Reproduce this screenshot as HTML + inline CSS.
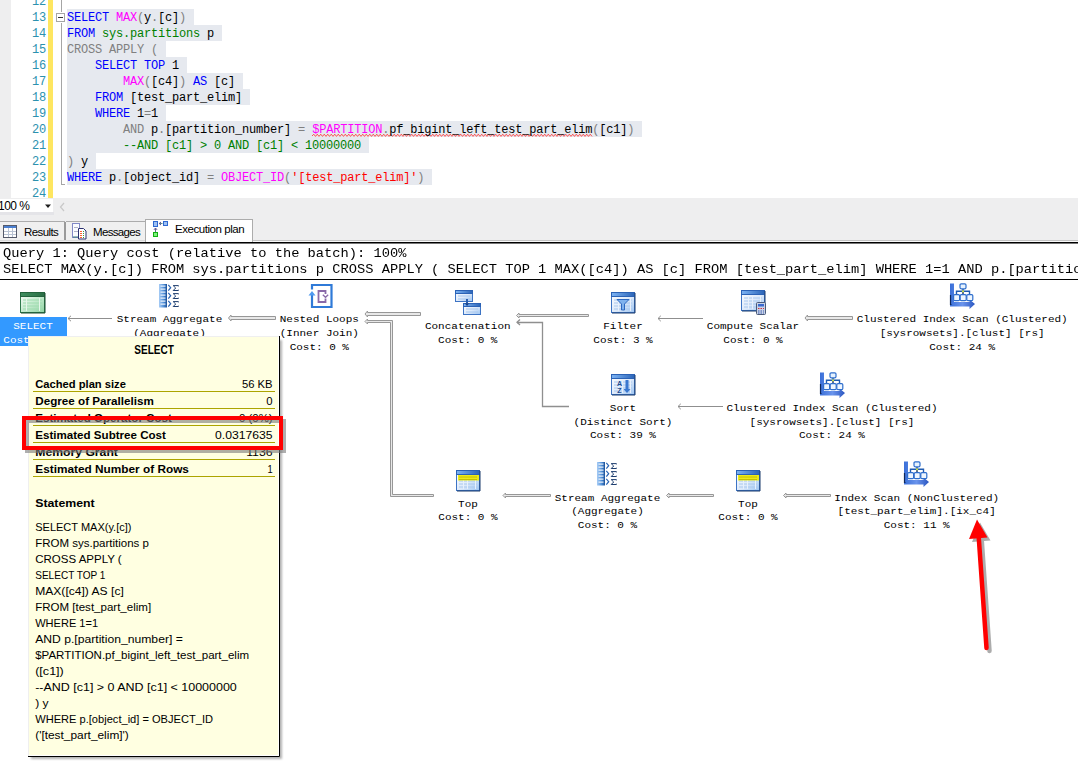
<!DOCTYPE html>
<html><head><meta charset="utf-8">
<style>
*{margin:0;padding:0;box-sizing:border-box}
html,body{width:1078px;height:774px;overflow:hidden;background:#fff;position:relative}
.a{position:absolute}
#ed{left:0;top:0;width:1078px;height:198px;background:#fff;overflow:hidden}
.ln{position:absolute;margin-top:1px;left:11px;width:35px;text-align:right;font:12px/16px "Liberation Mono",monospace;color:#2b91af;letter-spacing:-0.2px}
.cl{position:absolute;margin-top:1px;left:67px;height:16px;font:12px/16px "Liberation Mono",monospace;letter-spacing:-0.2px;white-space:pre;color:#000}
.hl{position:absolute;left:67px;height:16px;background:#e6e9ef}
.k{color:#0000ff}.f{color:#ff00ff}.g{color:#808080}.s{color:#008000}.c{color:#008000}.r{color:#ff0000}
.lab{position:absolute;font:11px/13.5px "Liberation Mono",monospace;color:#000;white-space:pre;text-align:center;transform:translateX(-50%)}
.tab{font:11px/13px "Liberation Sans",sans-serif;letter-spacing:-0.35px;color:#000;white-space:pre}
.hdr{font:13.73px/16px "Liberation Mono",monospace;color:#000;white-space:pre;transform:scaleY(0.87);transform-origin:0 11.7px}
</style></head><body>
<div id="ed" class="a">
  <div class="a" style="left:0;top:0;width:11px;height:198px;background:#eeeeef"></div>
  <div class="a" style="left:48px;top:0;width:5px;height:198px;background:#fee660"></div>
  <!-- highlights -->
  <div class="hl" style="top:9px;width:127px"></div>
  <div class="hl" style="top:25px;width:155px"></div>
  <div class="hl" style="top:41px;width:99px"></div>
  <div class="hl" style="top:57px;width:120px"></div>
  <div class="hl" style="top:73px;width:176px"></div>
  <div class="hl" style="top:89px;width:183px"></div>
  <div class="hl" style="top:105px;width:99px"></div>
  <div class="hl" style="top:121px;width:575px"></div>
  <div class="hl" style="top:137px;width:302px"></div>
  <div class="hl" style="top:153px;width:29px"></div>
  <div class="hl" style="top:169px;width:365px"></div>
  <!-- line numbers -->
  <div class="ln" style="top:-7px">12</div>
  <div class="ln" style="top:9px">13</div>
  <div class="ln" style="top:25px">14</div>
  <div class="ln" style="top:41px">15</div>
  <div class="ln" style="top:57px">16</div>
  <div class="ln" style="top:73px">17</div>
  <div class="ln" style="top:89px">18</div>
  <div class="ln" style="top:105px">19</div>
  <div class="ln" style="top:121px">20</div>
  <div class="ln" style="top:137px">21</div>
  <div class="ln" style="top:153px">22</div>
  <div class="ln" style="top:169px">23</div>
  <div class="ln" style="top:185px">24</div>
  <!-- fold -->
  <div class="a" style="left:61px;top:0;width:1px;height:12px;background:#a5a5a5"></div>
  <div class="a" style="left:56px;top:13px;width:9px;height:9px;border:1px solid #a5a5a5;background:#fff"></div>
  <div class="a" style="left:58px;top:17px;width:5px;height:1px;background:#333"></div>
  <div class="a" style="left:61px;top:23px;width:1px;height:162px;background:#a5a5a5"></div>
  <div class="a" style="left:61px;top:184px;width:4px;height:1px;background:#a5a5a5"></div>
  <svg class="a" style="left:0;top:0" width="700" height="198"><path d="M312 136 L313.75 134.2 L315.50 136.4 L317.25 134.2 L319.00 136.4 L320.75 134.2 L322.50 136.4 L324.25 134.2 L326.00 136.4 L327.75 134.2 L329.50 136.4 L331.25 134.2 L333.00 136.4 L334.75 134.2 L336.50 136.4 L338.25 134.2 L340.00 136.4 L341.75 134.2 L343.50 136.4 L345.25 134.2 L347.00 136.4 L348.75 134.2 L350.50 136.4 L352.25 134.2 L354.00 136.4 L355.75 134.2 L357.50 136.4 L359.25 134.2 L361.00 136.4 L362.75 134.2 L364.50 136.4 L366.25 134.2 L368.00 136.4 L369.75 134.2 L371.50 136.4 L373.25 134.2 L375.00 136.4 L376.75 134.2 L378.50 136.4 L380.25 134.2 L382.00 136.4 L383.75 134.2 L385.50 136.4 L387.25 134.2 L389.00 136.4 L390.75 134.2 L392.50 136.4 L394.25 134.2 L396.00 136.4 L397.75 134.2 L399.50 136.4 L401.25 134.2 L403.00 136.4 L404.75 134.2 L406.50 136.4 L408.25 134.2 L410.00 136.4 L411.75 134.2 L413.50 136.4 L415.25 134.2 L417.00 136.4 L418.75 134.2 L420.50 136.4 L422.25 134.2 L424.00 136.4 L425.75 134.2 L427.50 136.4 L429.25 134.2 L431.00 136.4 L432.75 134.2 L434.50 136.4 L436.25 134.2 L438.00 136.4 L439.75 134.2 L441.50 136.4 L443.25 134.2 L445.00 136.4 L446.75 134.2 L448.50 136.4 L450.25 134.2 L452.00 136.4 L453.75 134.2 L455.50 136.4 L457.25 134.2 L459.00 136.4 L460.75 134.2 L462.50 136.4 L464.25 134.2 L466.00 136.4 L467.75 134.2 L469.50 136.4 L471.25 134.2 L473.00 136.4 L474.75 134.2 L476.50 136.4 L478.25 134.2 L480.00 136.4 L481.75 134.2 L483.50 136.4 L485.25 134.2 L487.00 136.4 L488.75 134.2 L490.50 136.4 L492.25 134.2 L494.00 136.4 L495.75 134.2 L497.50 136.4 L499.25 134.2 L501.00 136.4 L502.75 134.2 L504.50 136.4 L506.25 134.2 L508.00 136.4 L509.75 134.2 L511.50 136.4 L513.25 134.2 L515.00 136.4 L516.75 134.2 L518.50 136.4 L520.25 134.2 L522.00 136.4 L523.75 134.2 L525.50 136.4 L527.25 134.2 L529.00 136.4 L530.75 134.2 L532.50 136.4 L534.25 134.2 L536.00 136.4 L537.75 134.2 L539.50 136.4 L541.25 134.2 L543.00 136.4 L544.75 134.2 L546.50 136.4 L548.25 134.2 L550.00 136.4 L551.75 134.2 L553.50 136.4 L555.25 134.2 L557.00 136.4 L558.75 134.2 L560.50 136.4 L562.25 134.2 L564.00 136.4 L565.75 134.2 L567.50 136.4 L569.25 134.2 L571.00 136.4 L572.75 134.2 L574.50 136.4 L576.25 134.2 L578.00 136.4 L579.75 134.2 L581.50 136.4 L583.25 134.2 L585.00 136.4 L586.75 134.2 L588.50 136.4 L590.25 134.2 L592.00 136.4" fill="none" stroke="#ff4040" stroke-width="0.9"/></svg>
  <!-- code -->
  <div class="cl" style="top:9px"><span class="k">SELECT</span> <span class="f">MAX</span><span class="g">(</span>y<span class="g">.</span>[c]<span class="g">)</span></div>
  <div class="cl" style="top:25px"><span class="k">FROM</span> <span class="s">sys.partitions</span> p</div>
  <div class="cl" style="top:41px"><span class="g">CROSS APPLY (</span></div>
  <div class="cl" style="top:57px">    <span class="k">SELECT TOP</span> 1</div>
  <div class="cl" style="top:73px">        <span class="f">MAX</span><span class="g">(</span>[c4]<span class="g">)</span> <span class="k">AS</span> [c]</div>
  <div class="cl" style="top:89px">    <span class="k">FROM</span> [test_part_elim]</div>
  <div class="cl" style="top:105px">    <span class="k">WHERE</span> 1<span class="g">=</span>1</div>
  <div class="cl" style="top:121px">        <span class="g">AND</span> p<span class="g">.</span>[partition_number] <span class="g">=</span> <span class="f">$PARTITION</span><span class="g">.</span>pf_bigint_left_test_part_elim<span class="g">(</span>[c1]<span class="g">)</span></div>
  <div class="cl" style="top:137px">        <span class="c">--AND [c1] &gt; 0 AND [c1] &lt; 10000000</span></div>
  <div class="cl" style="top:153px"><span class="g">)</span> y</div>
  <div class="cl" style="top:169px"><span class="k">WHERE</span> p<span class="g">.</span>[object_id] <span class="g">=</span> <span class="f">OBJECT_ID</span><span class="g">(</span><span class="r">'[test_part_elim]'</span><span class="g">)</span></div>
</div>
<!-- status / tabs -->
<div class="a" style="left:0;top:198px;width:1078px;height:44px;background:#eeeeef"></div>
<div class="a" style="left:0;top:199px;width:53px;height:13px;background:#fff"></div>
<div class="a" style="left:0;top:212px;width:54px;height:3px;background:#e4e4e8"></div>
<div class="a" style="left:-2px;top:199px;font:12px/14px 'Liberation Sans',sans-serif;letter-spacing:-0.5px;color:#000">100 %</div>
<svg class="a" style="left:0;top:198px" width="80" height="20"><path d="M45 6.5h6l-3 3.5z" fill="#1e1e1e"/><path d="M64 5l-3.5 4 3.5 4" fill="none" stroke="#c8c8c8" stroke-width="1.2"/></svg>
<!-- tabs -->
<div class="a" style="left:0;top:221px;width:65px;height:20px;background:#f0f0f0;border-top:1px solid #acacac;border-right:1px solid #acacac"></div>
<div class="a" style="left:64px;top:222px;width:2px;height:19px;background:#9a9a9a"></div>
<div class="a" style="left:66px;top:221px;width:80px;height:20px;background:#f0f0f0;border-top:1px solid #acacac;border-right:1px solid #acacac"></div>
<div class="a" style="left:145px;top:219px;width:108px;height:23px;background:#fff;border:1px solid #acacac;border-bottom:none"></div>
<div class="a" style="left:0;top:240px;width:145px;height:1px;background:#d8d8d8"></div>
<div class="a" style="left:253px;top:240px;width:825px;height:1px;background:#c4c4c4"></div>
<div class="a" style="left:253px;top:241px;width:825px;height:1px;background:#fafafa"></div>
<div class="a" style="left:0;top:242px;width:1078px;height:1px;background:#000"></div>
<div class="a" style="left:0;top:243px;width:1078px;height:1px;background:#777"></div>
<div class="a tab" style="left:24px;top:226px;font-size:11.5px;letter-spacing:-0.6px">Results</div>
<div class="a tab" style="left:93px;top:226px;font-size:11.5px;letter-spacing:-0.66px">Messages</div>
<div class="a tab" style="left:175px;top:223px;font-size:11.5px;letter-spacing:-0.45px">Execution plan</div>
<svg class="a" style="left:0;top:220px" width="260" height="22">
 <!-- results grid icon -->
 <rect x="3.5" y="5.5" width="13" height="12" fill="#fff" stroke="#555a6a"/>
 <rect x="4" y="6" width="12" height="2" fill="#4a7fd0"/>
 <path d="M4 11.5h12M4 14.5h12M8.5 8v9M12.5 8v9" stroke="#b9c3d3"/>
 <!-- messages icon -->
 <rect x="72.5" y="3.5" width="7" height="14" fill="#fafcff" stroke="#8189c6"/>
 <path d="M74 7.5h4M74 11.5h4" stroke="#b0b4c8"/><path d="M73 17h7" stroke="#3c7a78"/>
 <path d="M78.5 8.5h5l2.5 2.5v8h-7.5z" fill="#fff" stroke="#2b3070"/>
 <path d="M80 11.5h2M80 13.5h2M80 15.5h2M80 17.5h2" stroke="#ff6030"/>
 <path d="M83 11.5h1M83 13.5h1M83 15.5h1M83 17.5h1" stroke="#3a9a3a"/>
 <!-- exec plan icon -->
 <rect x="153.5" y="1.5" width="4" height="5" fill="#9cc0f4" stroke="#2f68d0"/>
 <rect x="163.5" y="1.5" width="4" height="4" fill="#9cc0f4" stroke="#2f68d0"/>
 <path d="M162.5 3.5h-3" stroke="#5a8a90"/><path d="M161 2l-1.8 1.5 1.8 1.5" stroke="#5a4a90" fill="none"/>
 <path d="M155.5 12v-3.5" stroke="#5a6a90"/><path d="M154 9.8l1.5-1.8 1.5 1.8" stroke="#5a4a90" fill="none"/>
 <rect x="153.5" y="12.5" width="4" height="4" fill="#7cf07c" stroke="#10b010"/>
</svg>
<!-- plan header -->
<div class="a hdr" style="left:3px;top:246px">Query 1: Query cost (relative to the batch): 100%</div>
<div class="a hdr" style="left:3px;top:262px">SELECT MAX(y.[c]) FROM sys.partitions p CROSS APPLY ( SELECT TOP 1 MAX([c4]) AS [c] FROM [test_part_elim] WHERE 1=1 AND p.[partition_number] = $PARTITION.pf_bigint_left_test_part_elim([c1])</div>
<div class="a" style="left:0;top:279px;width:1078px;height:1px;background:#000"></div>
<!-- PLAN -->
<svg class="a" style="left:0;top:0" width="1078" height="774">
<defs>
 <linearGradient id="gHead" x1="0" y1="0" x2="1" y2="0"><stop offset="0" stop-color="#7db4f4"/><stop offset="1" stop-color="#2a64b8"/></linearGradient>
 <linearGradient id="gBody" x1="0" y1="0" x2="1" y2="1"><stop offset="0" stop-color="#ffffff"/><stop offset="0.55" stop-color="#dce9fa"/><stop offset="1" stop-color="#9cc4f2"/></linearGradient>
 <linearGradient id="gGHead" x1="0" y1="0" x2="1" y2="0"><stop offset="0" stop-color="#3f8f5f"/><stop offset="1" stop-color="#2a6e45"/></linearGradient>
 <linearGradient id="gGBody" x1="0" y1="0" x2="1" y2="1"><stop offset="0" stop-color="#ffffff"/><stop offset="0.5" stop-color="#c7ecd0"/><stop offset="1" stop-color="#8fd3a2"/></linearGradient>
 
 
 
<linearGradient id="gBar" x1="0" y1="0" x2="1" y2="0"><stop offset="0" stop-color="#3a6fd8"/><stop offset="0.5" stop-color="#6a94ec"/><stop offset="1" stop-color="#2a55c0"/></linearGradient>
<linearGradient id="gCol" x1="0" y1="0" x2="1" y2="0"><stop offset="0" stop-color="#a8cdf6"/><stop offset="0.6" stop-color="#4f8fd8"/><stop offset="1" stop-color="#1b4f96"/></linearGradient>
</defs>
<rect x="0" y="317" width="67" height="29" fill="#3399ff"/><g font-family="Liberation Mono" font-size="11" fill="#fff" text-anchor="middle" xml:space="preserve"><text x="33" y="329" transform="translate(0 329) scale(1 0.87) translate(0 -329)">SELECT</text><text x="33" y="342.6" transform="translate(0 342.6) scale(1 0.87) translate(0 -342.6)">Cost: 0 %</text></g><g font-family="Liberation Mono" font-size="11" fill="#000" text-anchor="middle" xml:space="preserve"><text x="169.5" y="322.5" transform="translate(0 322.5) scale(1 0.87) translate(0 -322.5)">Stream Aggregate</text><text x="169.5" y="336.1" transform="translate(0 336.1) scale(1 0.87) translate(0 -336.1)">(Aggregate)</text><text x="169.5" y="349.7" transform="translate(0 349.7) scale(1 0.87) translate(0 -349.7)">Cost: 0 %</text><text x="319.3" y="322.5" transform="translate(0 322.5) scale(1 0.87) translate(0 -322.5)">Nested Loops</text><text x="319.3" y="336.1" transform="translate(0 336.1) scale(1 0.87) translate(0 -336.1)">(Inner Join)</text><text x="319.3" y="349.7" transform="translate(0 349.7) scale(1 0.87) translate(0 -349.7)">Cost: 0 %</text><text x="962.2" y="322.5" transform="translate(0 322.5) scale(1 0.87) translate(0 -322.5)">Clustered Index Scan (Clustered)</text><text x="962.2" y="336.1" transform="translate(0 336.1) scale(1 0.87) translate(0 -336.1)">[sysrowsets].[clust] [rs]</text><text x="962.2" y="349.7" transform="translate(0 349.7) scale(1 0.87) translate(0 -349.7)">Cost: 24 %</text><text x="467.8" y="329" transform="translate(0 329) scale(1 0.87) translate(0 -329)">Concatenation</text><text x="467.8" y="342.6" transform="translate(0 342.6) scale(1 0.87) translate(0 -342.6)">Cost: 0 %</text><text x="623" y="329" transform="translate(0 329) scale(1 0.87) translate(0 -329)">Filter</text><text x="623" y="342.6" transform="translate(0 342.6) scale(1 0.87) translate(0 -342.6)">Cost: 3 %</text><text x="753" y="329" transform="translate(0 329) scale(1 0.87) translate(0 -329)">Compute Scalar</text><text x="753" y="342.6" transform="translate(0 342.6) scale(1 0.87) translate(0 -342.6)">Cost: 0 %</text><text x="623" y="411.5" transform="translate(0 411.5) scale(1 0.87) translate(0 -411.5)">Sort</text><text x="623" y="425" transform="translate(0 425) scale(1 0.87) translate(0 -425)">(Distinct Sort)</text><text x="623" y="438.5" transform="translate(0 438.5) scale(1 0.87) translate(0 -438.5)">Cost: 39 %</text><text x="832" y="411.5" transform="translate(0 411.5) scale(1 0.87) translate(0 -411.5)">Clustered Index Scan (Clustered)</text><text x="832" y="425" transform="translate(0 425) scale(1 0.87) translate(0 -425)">[sysrowsets].[clust] [rs]</text><text x="832" y="438.5" transform="translate(0 438.5) scale(1 0.87) translate(0 -438.5)">Cost: 24 %</text><text x="607.5" y="500.8" transform="translate(0 500.8) scale(1 0.87) translate(0 -500.8)">Stream Aggregate</text><text x="607.5" y="514.3" transform="translate(0 514.3) scale(1 0.87) translate(0 -514.3)">(Aggregate)</text><text x="607.5" y="527.8" transform="translate(0 527.8) scale(1 0.87) translate(0 -527.8)">Cost: 0 %</text><text x="916.7" y="500.8" transform="translate(0 500.8) scale(1 0.87) translate(0 -500.8)">Index Scan (NonClustered)</text><text x="916.7" y="514.3" transform="translate(0 514.3) scale(1 0.87) translate(0 -514.3)">[test_part_elim].[ix_c4]</text><text x="916.7" y="527.8" transform="translate(0 527.8) scale(1 0.87) translate(0 -527.8)">Cost: 11 %</text><text x="468" y="506.7" transform="translate(0 506.7) scale(1 0.87) translate(0 -506.7)">Top</text><text x="468" y="520.2" transform="translate(0 520.2) scale(1 0.87) translate(0 -520.2)">Cost: 0 %</text><text x="748" y="506.7" transform="translate(0 506.7) scale(1 0.87) translate(0 -506.7)">Top</text><text x="748" y="520.2" transform="translate(0 520.2) scale(1 0.87) translate(0 -520.2)">Cost: 0 %</text></g>
<!-- connectors -->
<g fill="#e8e8e8" stroke="#979797" stroke-width="1" stroke-linejoin="miter">
 <path d="M228.5 318 L231.0 315.0 V316.5 H275.5 V319.5 H231.0 V321.0 Z"/>
 <path d="M365 314 L367.5 311.0 V312.5 H420.5 V315.5 H367.5 V317.0 Z"/>
 <path d="M365 321.5 L367.5 319.0 V320.5 H392.5 V494.5 H433.5 V496.5 H390.5 V322.5 H367.5 V324.0 Z"/>
 <path d="M516.5 315.5 L519.0 313.0 V314.5 H588.5 V316.5 H519.0 V318.0 Z"/>
 <path d="M805 318 L807.5 315.0 V316.5 H852.5 V319.5 H807.5 V321.0 Z"/>
 <path d="M503 495.5 L505.5 493.0 V494.5 H550.5 V496.5 H505.5 V498.0 Z"/>
 <path d="M666.5 495.5 L669.0 493.0 V494.5 H713.5 V496.5 H669.0 V498.0 Z"/>
 <path d="M783.5 495.5 L786.0 493.0 V494.5 H830.5 V496.5 H786.0 V498.0 Z"/>
</g>
<g fill="none" stroke="#8f8f8f">
 <path d="M68 318.5H112M658 318.5H703M678 406.5H723" stroke-width="1"/>
 <path d="M71 315.8L68 318.5L71 321.2M660.8 315.8L658 318.5L660.8 321.2M680.8 403.8L678 406.5L680.8 409.2" stroke-width="1"/>
 <path d="M517 322.5H542.5V406.5H569" stroke-width="1.3"/>
 <path d="M520 319.5L517 322.3L520 325.1" stroke-width="1.3"/>
</g>
<!-- icons -->
<g transform="translate(20,292)">
 <rect x="0.5" y="0.5" width="24" height="20" fill="url(#gGBody)" stroke="#2f7a4c"/>
 <rect x="0.5" y="0.5" width="24" height="4" fill="url(#gGHead)" stroke="#24633d"/>
 <path d="M3 8h19M3 11h19M3 14h19M3 17h19" stroke="#9fdcb0" stroke-width="1"/>
 <path d="M6.5 6v13M19.5 6v13" stroke="#e5f6e9"/>
 <path d="M25 1v20H1" stroke="#1c4f30" fill="none"/>
</g>
<g transform="translate(159,284)">
  
  <rect x="0" y="0" width="8" height="23.5" fill="url(#gCol)"/>
  <path d="M1.5 2.2h5M1.5 5.2h5M1.5 8.2h5M1.5 11.2h5M1.5 14.2h5M1.5 17.2h5M1.5 20.2h5" stroke="#fff" stroke-width="1.3" opacity="0.85"/>
  <path d="M9.3 0.8l2.4 2.9-2.4 2.9M9.3 8.8l2.4 2.9-2.4 2.9M9.3 16.8l2.4 2.9-2.4 2.9" fill="none" stroke="#2a64b4" stroke-width="1.2"/>
  <path d="M19.4 2.4V1.6H14.2l2.5 2.4-2.5 2.5h5.2V5.7M19.4 10.4V9.6H14.2l2.5 2.4-2.5 2.5h5.2V13.7M19.4 18.4V17.6H14.2l2.5 2.4-2.5 2.5h5.2V21.7" fill="none" stroke="#1d3d6e" stroke-width="1"/>
 </g>
<g transform="translate(597,462)">
  
  <rect x="0" y="0" width="8" height="23.5" fill="url(#gCol)"/>
  <path d="M1.5 2.2h5M1.5 5.2h5M1.5 8.2h5M1.5 11.2h5M1.5 14.2h5M1.5 17.2h5M1.5 20.2h5" stroke="#fff" stroke-width="1.3" opacity="0.85"/>
  <path d="M9.3 0.8l2.4 2.9-2.4 2.9M9.3 8.8l2.4 2.9-2.4 2.9M9.3 16.8l2.4 2.9-2.4 2.9" fill="none" stroke="#2a64b4" stroke-width="1.2"/>
  <path d="M19.4 2.4V1.6H14.2l2.5 2.4-2.5 2.5h5.2V5.7M19.4 10.4V9.6H14.2l2.5 2.4-2.5 2.5h5.2V13.7M19.4 18.4V17.6H14.2l2.5 2.4-2.5 2.5h5.2V21.7" fill="none" stroke="#1d3d6e" stroke-width="1"/>
 </g>
<!-- nested loops -->
<g transform="translate(307,283)" fill="none">
 <path d="M5 6.5V2h19.5v22H5V11" stroke="#2f7ad8" stroke-width="2.2"/>
 <path d="M1.5 12.5l3.5-4.5 3.5 4.5z" fill="#4f9af0" stroke="none"/>
 <path d="M18.5 11V8H11.5V19H18.5V15.5" stroke="#8a6aa8" stroke-width="1.8"/>
 <path d="M15.8 11.8l2.7 2.5 2.7-2.5" stroke="#8a6aa8" stroke-width="1.3"/>
</g>
<!-- concatenation -->
<g transform="translate(455,290)">
 <rect x="0.5" y="0.5" width="17" height="11" fill="url(#gBody)" stroke="#3d74c4"/>
 <rect x="0.5" y="0.5" width="17" height="3" fill="url(#gHead)" stroke="#2b62b5"/>
 <path d="M3 6h12M3 9h12" stroke="#a9c8ee"/>
 <rect x="8.5" y="13.5" width="17" height="11" fill="url(#gBody)" stroke="#3d74c4"/>
 <rect x="8.5" y="13.5" width="17" height="3" fill="url(#gHead)" stroke="#2b62b5"/>
 <path d="M11 19h12M11 22h12" stroke="#a9c8ee"/>
 <path d="M12 9v6" stroke="#2a5fb0" stroke-width="2"/><path d="M10 13.5l2 2.5 2-2.5" fill="#1a3f80"/>
</g>
<!-- filter -->
<g transform="translate(611,292)">
 <g>
  <rect x="0.5" y="0.5" width="23" height="20" fill="url(#gBody)" stroke="#3d74c4"/>
  <rect x="0.5" y="0.5" width="23" height="4" fill="url(#gHead)" stroke="#2b62b5" stroke-width="1"/>
  <path d="M3 8h18M3 11h18M3 14h18M3 17h18" stroke="#a9c8ee" stroke-width="1"/>
  <path d="M7.5 6v13M11.5 6v13M19.5 6v13" stroke="#e8f0fb" stroke-width="1"/>
  <path d="M24 1v20H1" stroke="#1d3c6c" fill="none" stroke-width="1"/>
 </g>
 <path d="M6 7.5h12l-4.5 4.5v6h-3v-6z" fill="#7fb2ee" stroke="#2d68c0" stroke-width="1"/>
</g>
<!-- compute scalar -->
<g transform="translate(741,290)">
 <g>
  <rect x="0.5" y="0.5" width="23" height="20" fill="url(#gBody)" stroke="#3d74c4"/>
  <rect x="0.5" y="0.5" width="23" height="4" fill="url(#gHead)" stroke="#2b62b5" stroke-width="1"/>
  <path d="M3 8h18M3 11h18M3 14h18M3 17h18" stroke="#a9c8ee" stroke-width="1"/>
  <path d="M7.5 6v13M11.5 6v13M19.5 6v13" stroke="#e8f0fb" stroke-width="1"/>
  <path d="M24 1v20H1" stroke="#1d3c6c" fill="none" stroke-width="1"/>
 </g>
 <rect x="15.5" y="12.5" width="9" height="12" rx="1" fill="#c9d3e6" stroke="#4a5a7a"/>
 <rect x="17" y="14" width="6" height="2.5" fill="#3a6ad0"/>
 <path d="M17 18.5h1.5M19.5 18.5h1.5M22 18.5h1" stroke="#d03040"/>
 <path d="M17 21h1.5M19.5 21h1.5M22 21h1M17 23h1.5M19.5 23h1.5M22 23h1" stroke="#3a5ab0"/>
</g>
<g transform="translate(950,283)">
  
  <path d="M0 0.5h4v18.5h15.5v-2.5l5.5 4.5-5.5 5v-2.5H0z" fill="url(#gBar)"/>
  <path d="M0.5 12v9.5h1" stroke="#10285a" stroke-width="1.2" fill="none"/>
  <rect x="10" y="0.8" width="6" height="5" rx="1.2" fill="#e6f2fe" stroke="#2f6ecc" stroke-width="1.2"/>
  <path d="M13 6v2M6.5 11.5V8.3h13V11.5" fill="none" stroke="#1f5ab0" stroke-width="1.4"/>
  <path d="M13 8v3" stroke="#0e2e66" stroke-width="1.4"/>
  <circle cx="13" cy="8.3" r="1.1" fill="#d4e84a"/>
  <rect x="3.6" y="11.6" width="6" height="6" rx="1.2" fill="#eef6ff" stroke="#2f6ecc" stroke-width="1.2"/>
  <rect x="10.2" y="11.6" width="6" height="6" rx="1.2" fill="#eef6ff" stroke="#2f6ecc" stroke-width="1.2"/>
  <rect x="16.8" y="11.6" width="6" height="6" rx="1.2" fill="#eef6ff" stroke="#2f6ecc" stroke-width="1.2"/>
 </g>
<g transform="translate(820,372)">
  
  <path d="M0 0.5h4v18.5h15.5v-2.5l5.5 4.5-5.5 5v-2.5H0z" fill="url(#gBar)"/>
  <path d="M0.5 12v9.5h1" stroke="#10285a" stroke-width="1.2" fill="none"/>
  <rect x="10" y="0.8" width="6" height="5" rx="1.2" fill="#e6f2fe" stroke="#2f6ecc" stroke-width="1.2"/>
  <path d="M13 6v2M6.5 11.5V8.3h13V11.5" fill="none" stroke="#1f5ab0" stroke-width="1.4"/>
  <path d="M13 8v3" stroke="#0e2e66" stroke-width="1.4"/>
  <circle cx="13" cy="8.3" r="1.1" fill="#d4e84a"/>
  <rect x="3.6" y="11.6" width="6" height="6" rx="1.2" fill="#eef6ff" stroke="#2f6ecc" stroke-width="1.2"/>
  <rect x="10.2" y="11.6" width="6" height="6" rx="1.2" fill="#eef6ff" stroke="#2f6ecc" stroke-width="1.2"/>
  <rect x="16.8" y="11.6" width="6" height="6" rx="1.2" fill="#eef6ff" stroke="#2f6ecc" stroke-width="1.2"/>
 </g>
<g transform="translate(904,461)">
  
  <path d="M0 0.5h4v18.5h15.5v-2.5l5.5 4.5-5.5 5v-2.5H0z" fill="url(#gBar)"/>
  <path d="M0.5 12v9.5h1" stroke="#10285a" stroke-width="1.2" fill="none"/>
  <rect x="10" y="0.8" width="6" height="5" rx="1.2" fill="#e6f2fe" stroke="#2f6ecc" stroke-width="1.2"/>
  <path d="M13 6v2M6.5 11.5V8.3h13V11.5" fill="none" stroke="#1f5ab0" stroke-width="1.4"/>
  <path d="M13 8v3" stroke="#0e2e66" stroke-width="1.4"/>
  <circle cx="13" cy="8.3" r="1.1" fill="#d4e84a"/>
  <rect x="3.6" y="11.6" width="6" height="6" rx="1.2" fill="#eef6ff" stroke="#2f6ecc" stroke-width="1.2"/>
  <rect x="10.2" y="11.6" width="6" height="6" rx="1.2" fill="#eef6ff" stroke="#2f6ecc" stroke-width="1.2"/>
  <rect x="16.8" y="11.6" width="6" height="6" rx="1.2" fill="#eef6ff" stroke="#2f6ecc" stroke-width="1.2"/>
 </g>
<!-- sort -->
<g transform="translate(611,374)">
 <g>
  <rect x="0.5" y="0.5" width="23" height="20" fill="url(#gBody)" stroke="#3d74c4"/>
  <rect x="0.5" y="0.5" width="23" height="4" fill="url(#gHead)" stroke="#2b62b5" stroke-width="1"/>
  <path d="M3 8h18M3 11h18M3 14h18M3 17h18" stroke="#a9c8ee" stroke-width="1"/>
  <path d="M7.5 6v13M11.5 6v13M19.5 6v13" stroke="#e8f0fb" stroke-width="1"/>
  <path d="M24 1v20H1" stroke="#1d3c6c" fill="none" stroke-width="1"/>
 </g>
 <text x="8.5" y="11.5" font-family="Liberation Sans" font-weight="bold" font-size="7" fill="#1d4a90" text-anchor="middle">A</text>
 <text x="8.5" y="18.5" font-family="Liberation Sans" font-weight="bold" font-size="7" fill="#1d4a90" text-anchor="middle">Z</text>
 <path d="M16 6v10" stroke="#3a78d0" stroke-width="3"/><path d="M12.5 15l3.5 4 3.5-4z" fill="#3a78d0"/>
</g>
<!-- tops -->
<g transform="translate(456,470)"><g>
  <rect x="0.5" y="0.5" width="23" height="20" fill="url(#gBody)" stroke="#3d74c4"/>
  <rect x="0.5" y="0.5" width="23" height="4" fill="url(#gHead)" stroke="#2b62b5" stroke-width="1"/>
  <path d="M3 8h18M3 11h18M3 14h18M3 17h18" stroke="#a9c8ee" stroke-width="1"/>
  <path d="M7.5 6v13M11.5 6v13M19.5 6v13" stroke="#e8f0fb" stroke-width="1"/>
  <path d="M24 1v20H1" stroke="#1d3c6c" fill="none" stroke-width="1"/>
 </g><rect x="2" y="5" width="21" height="5.5" fill="#f0ec00" opacity="0.9"/><path d="M3 7h18M3 9.5h18" stroke="#c8c000"/></g>
<g transform="translate(736,470)"><g>
  <rect x="0.5" y="0.5" width="23" height="20" fill="url(#gBody)" stroke="#3d74c4"/>
  <rect x="0.5" y="0.5" width="23" height="4" fill="url(#gHead)" stroke="#2b62b5" stroke-width="1"/>
  <path d="M3 8h18M3 11h18M3 14h18M3 17h18" stroke="#a9c8ee" stroke-width="1"/>
  <path d="M7.5 6v13M11.5 6v13M19.5 6v13" stroke="#e8f0fb" stroke-width="1"/>
  <path d="M24 1v20H1" stroke="#1d3c6c" fill="none" stroke-width="1"/>
 </g><rect x="2" y="5" width="21" height="5.5" fill="#f0ec00" opacity="0.9"/><path d="M3 7h18M3 9.5h18" stroke="#c8c000"/></g>
</svg>
<!-- TOOLTIP -->
<svg class="a" style="left:0;top:0" width="1078" height="774">
 <defs><filter id="blur1" x="-10%" y="-10%" width="120%" height="120%"><feGaussianBlur stdDeviation="1.3"/></filter></defs>
 <rect x="31" y="340" width="251" height="419" fill="#000" opacity="0.3" filter="url(#blur1)"/>
 <rect x="28" y="336" width="252" height="421" fill="#ffffe1"/>
 <path d="M28.5 757V336.5H279" stroke="#efefef" fill="none"/>
 <path d="M278.5 337V755.5H29" stroke="#fff" fill="none"/>
 <path d="M279.5 336V756.5H28" stroke="#000" fill="none"/>
 <g font-family="Liberation Sans" fill="#000" xml:space="preserve">
<text x="134.3" y="354.3" font-weight="bold" font-size="12.3" textLength="39.5" lengthAdjust="spacingAndGlyphs">SELECT</text>
<text x="35.3" y="387.6" font-weight="bold" font-size="11.5" textLength="90.6" lengthAdjust="spacingAndGlyphs">Cached plan size</text><text x="272.6" y="387.6" font-size="11.5" text-anchor="end" textLength="30.6" lengthAdjust="spacingAndGlyphs">56 KB</text>
<rect x="33" y="391" width="242" height="1" fill="#aca400"/>
<text x="35.3" y="404.6" font-weight="bold" font-size="11.5" textLength="118.6" lengthAdjust="spacingAndGlyphs">Degree of Parallelism</text><text x="272.6" y="404.6" font-size="11.5" text-anchor="end" textLength="6.3" lengthAdjust="spacingAndGlyphs">0</text>
<rect x="33" y="408" width="242" height="1" fill="#aca400"/>
<text x="35.3" y="421.6" font-weight="bold" font-size="11.5" textLength="136.6" lengthAdjust="spacingAndGlyphs">Estimated Operator Cost</text><text x="272.6" y="421.6" font-size="11.5" text-anchor="end" textLength="33.6" lengthAdjust="spacingAndGlyphs">0 (0%)</text>
<rect x="33" y="425" width="242" height="1" fill="#aca400"/>
<text x="35.3" y="438.6" font-weight="bold" font-size="11.5" textLength="130.6" lengthAdjust="spacingAndGlyphs">Estimated Subtree Cost</text><text x="272.6" y="438.6" font-size="11.5" text-anchor="end" textLength="57.6" lengthAdjust="spacingAndGlyphs">0.0317635</text>
<rect x="33" y="442" width="242" height="1" fill="#aca400"/>
<text x="35.3" y="455.6" font-weight="bold" font-size="11.5" textLength="82.6" lengthAdjust="spacingAndGlyphs">Memory Grant</text><text x="272.6" y="455.6" font-size="11.5" text-anchor="end" textLength="26.400000000000002" lengthAdjust="spacingAndGlyphs">1136</text>
<rect x="33" y="459" width="242" height="1" fill="#aca400"/>
<text x="35.3" y="472.6" font-weight="bold" font-size="11.5" textLength="153.6" lengthAdjust="spacingAndGlyphs">Estimated Number of Rows</text><text x="272.6" y="472.6" font-size="11.5" text-anchor="end" textLength="5.199999999999999" lengthAdjust="spacingAndGlyphs">1</text>
<rect x="33" y="476" width="242" height="1" fill="#aca400"/>
<text x="35.2" y="507" font-weight="bold" font-size="11.5" textLength="59.5" lengthAdjust="spacingAndGlyphs">Statement</text>
<text x="35.2" y="531" font-size="11.5" textLength="96.3" lengthAdjust="spacingAndGlyphs">SELECT MAX(y.[c])</text>
<text x="35.2" y="547" font-size="11.5">FROM sys.partitions p</text>
<text x="35.2" y="563" font-size="11.5">CROSS APPLY (</text>
<text x="35.2" y="579" font-size="11.5" textLength="70.19999999999999" lengthAdjust="spacingAndGlyphs">SELECT TOP 1</text>
<text x="35.2" y="595" font-size="11.5" textLength="88.6" lengthAdjust="spacingAndGlyphs">MAX([c4]) AS [c]</text>
<text x="35.2" y="611" font-size="11.5" textLength="115.89999999999999" lengthAdjust="spacingAndGlyphs">FROM [test_part_elim]</text>
<text x="35.2" y="627" font-size="11.5" textLength="62.9" lengthAdjust="spacingAndGlyphs">WHERE 1=1</text>
<text x="35.2" y="643" font-size="11.5" textLength="147.6" lengthAdjust="spacingAndGlyphs">AND p.[partition_number] =</text>
<text x="35.2" y="659" font-size="11.5" textLength="213.9" lengthAdjust="spacingAndGlyphs">$PARTITION.pf_bigint_left_test_part_elim</text>
<text x="35.2" y="675" font-size="11.5" textLength="28.6" lengthAdjust="spacingAndGlyphs">([c1])</text>
<text x="35.2" y="691" font-size="11.5" textLength="201.6" lengthAdjust="spacingAndGlyphs">--AND [c1] &gt; 0 AND [c1] &lt; 10000000</text>
<text x="35.2" y="707" font-size="11.5" textLength="13.4" lengthAdjust="spacingAndGlyphs">) y</text>
<text x="35.2" y="723" font-size="11.5" textLength="177.79999999999998" lengthAdjust="spacingAndGlyphs">WHERE p.[object_id] = OBJECT_ID</text>
<text x="35.2" y="739" font-size="11.5" textLength="93.6" lengthAdjust="spacingAndGlyphs">('[test_part_elim]')</text>
 </g>
 <!-- red box -->
 <rect x="27" y="421" width="257" height="30" fill="none" stroke="#7a7a7a" stroke-width="4" opacity="0.6"/>
 <rect x="24" y="418" width="257" height="30" fill="none" stroke="#ff0000" stroke-width="4"/>
 <!-- red arrow -->
 <g transform="translate(3,3)" opacity="0.55"><path d="M986.5 648L978.5 534" stroke="#6a6a6a" stroke-width="4.5" stroke-linecap="round"/><path d="M977 519.5L969 539L987.5 537.5z" fill="#6a6a6a"/></g>
 <path d="M986.5 648L978.5 534" stroke="#ff0000" stroke-width="4.5" stroke-linecap="round"/>
 <path d="M977 519.5L969 539L987.5 537.5z" fill="#ff0000"/>
</svg>
</body></html>
